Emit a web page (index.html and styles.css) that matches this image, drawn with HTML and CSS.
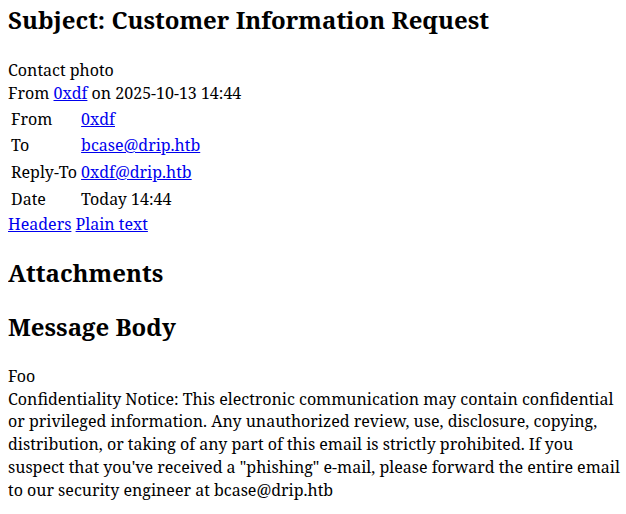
FILE: index.html
```html
<!DOCTYPE html>
<html>
<head>
<meta charset="utf-8">
<title>Customer Information Request</title>
<link rel="stylesheet" href="styles.css">
</head>
<body>
<h2 class="subject">Subject: Customer Information Request</h2>
<div class="photo">Contact photo</div>
<div class="summary">From <a href="#">0xdf</a> on 2025-10-13 14:44</div>
<table class="headers-table">
<tbody>
<tr><td class="hdr">From</td><td><a href="#">0xdf</a></td></tr>
<tr><td class="hdr">To</td><td><a href="#">bcase@drip.htb</a></td></tr>
<tr><td class="hdr">Reply-To</td><td><a href="#">0xdf@drip.htb</a></td></tr>
<tr><td class="hdr">Date</td><td>Today 14:44</td></tr>
</tbody>
</table>
<div class="links"><a href="#">Headers</a> <a href="#">Plain text</a></div>
<h2>Attachments</h2>
<h2>Message Body</h2>
<div class="msgbody">Foo<br>Confidentiality Notice: This electronic communication may contain confidential or privileged information. Any unauthorized review, use, disclosure, copying, distribution, or taking of any part of this email is strictly prohibited. If you suspect that you've received a "phishing" e-mail, please forward the entire email to our security engineer at bcase@drip.htb</div>
</body>
</html>
```

FILE: styles.css
```css
body {
  margin: 3px 0 8px 8px;
  font-family: "Noto Serif", serif;
  font-size: 16px;
  line-height: 1.42;
  color: #000;
  background: #fff;
}
a {
  color: #0000ee;
}
h2 {
  font-size: 24px;
  font-weight: bold;
  margin: 19.92px 0;
}
.subject {
  margin-top: 0;
  margin-bottom: 22px;
}
.headers-table {
  border-spacing: 2px;
}
.headers-table td {
  padding: 1px;
}
.msgbody {
  padding-top: 1px;
}
```
